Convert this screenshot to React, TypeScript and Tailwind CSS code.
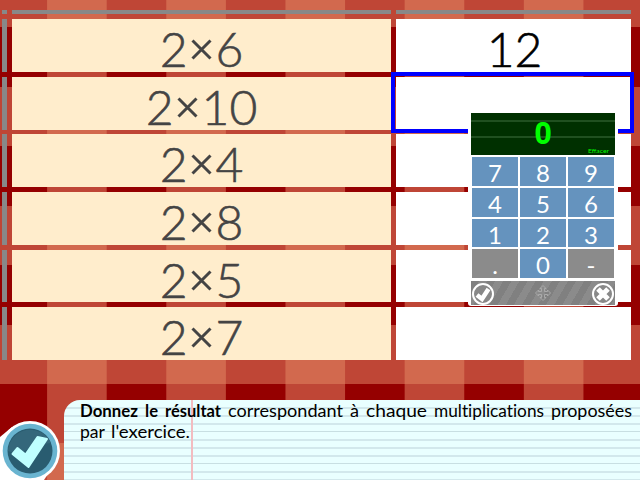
const rows: { q: string; a: string; size: string }[] = [
  { q: "6", a: "12", size: "mb-[5px] h-[53px]" },
  { q: "10", a: "", size: "mb-[4px] h-[53px]" },
  { q: "4", a: "", size: "mb-[5px] h-[53px]" },
  { q: "8", a: "", size: "mb-[5px] h-[53px]" },
  { q: "5", a: "", size: "mb-[5px] h-[52px]" },
  { q: "7", a: "", size: "h-[53px]" },
];

const keys = ["7", "8", "9", "4", "5", "6", "1", "2", "3", ".", "0", "-"];

const words: { t: string; w: number; bold?: boolean }[] = [
  { t: "Donnez", w: 58, bold: true },
  { t: "le", w: 13, bold: true },
  { t: "résultat", w: 56, bold: true },
  { t: "correspondant", w: 115 },
  { t: "à", w: 9 },
  { t: "chaque", w: 61 },
  { t: "multiplications", w: 110 },
  { t: "proposées", w: 81 },
];

function Word({ t, w, bold }: { t: string; w: number; bold?: boolean }) {
  return (
    <svg width={w} height="21" className="block shrink-0 overflow-visible">
      <text
        x="0"
        y="16"
        textLength={w}
        lengthAdjust="spacingAndGlyphs"
        className={bold ? "text-[16.5px] font-bold" : "text-[16.5px] font-normal"}
        style={{ fontVariantLigatures: "none" }}
      >
        {t}
      </text>
    </svg>
  );
}

function Exercise() {
  return (
    <div className="ml-[2px] w-[629px] pt-[10px]">
      <div className="mb-[5px] flex h-[4px] gap-[5px]">
        <div className="w-[5px] bg-[#888]" />
        <div className="w-[379px] bg-[#888]" />
        <div className="w-[235px] bg-[#888]" />
      </div>
      {rows.map((r) => (
        <div key={r.q} className={"flex gap-[5px] " + r.size}>
          <div className="w-[5px] bg-[#888]" />
          <div className="flex w-[379px] justify-center bg-[#ffedcc] text-[48px] leading-[60px] font-light text-[#444] [-webkit-text-stroke:0.6px_#444]">
            <span>2</span>
            <svg width="28" height="53" className="block overflow-visible">
              <path d="M4.5 21.5L22.5 39.5M22.5 21.5L4.5 39.5" stroke="#444" strokeWidth="3" />
            </svg>
            <span>{r.q}</span>
          </div>
          <div className="w-[235px] bg-white pl-[2px] text-center text-[48px] leading-[60px] font-light text-black [-webkit-text-stroke:0.6px_#000]">
            {r.a}
          </div>
        </div>
      ))}
    </div>
  );
}

function Keypad() {
  return (
    <div className="absolute top-[110px] left-[468px] h-[196px] w-[150px] rounded-[3px] bg-white px-[3px] pt-[3px]">
      <div className="relative flex h-[42px] justify-center bg-[#003000] pt-[7px]">
        <div className="absolute inset-x-0 top-[7px] h-[18px] border-y-2 border-[#205020]" />
        <span className="relative font-['Noto_Sans',sans-serif] text-[30px] leading-[26px] font-bold text-[#00ff00]">0</span>
        <svg className="absolute right-[5px] bottom-0 h-[8px] w-[22px]">
          <text x="0" y="6" textLength="21" lengthAdjust="spacingAndGlyphs" fill="#00ff00" className="text-[6px]">
            Effacer
          </text>
        </svg>
      </div>
      <div className="mx-px mt-[2px] grid h-[121px] grid-cols-3 grid-rows-[29px_29px_28px_29px] gap-[2px]">
        {keys.map((k) => (
          <div
            key={k}
            className={
              k === "." || k === "-"
                ? "bg-[#8b8b8b] text-center text-[24px] leading-[32px] text-white"
                : "bg-[#6593be] text-center text-[24px] leading-[31px] text-white"
            }
          >
            {k}
          </div>
        ))}
      </div>
      <div className="mt-[3px] flex h-[24px] items-center justify-between bg-[repeating-linear-gradient(120deg,#808080_0px,#808080_7px,#8b8b8b_7px,#8b8b8b_14px)]">
        <svg width="24" height="24" viewBox="0 0 24 24">
          <circle cx="12" cy="13" r="10" fill="#888" stroke="#fff" strokeWidth="2" />
          <path d="M6 14L11 18L17.5 8" fill="none" stroke="#fff" strokeWidth="4.5" />
        </svg>
        <svg width="18" height="20" viewBox="0 0 18 20" fill="none" stroke="#aaa">
          <path d="M9 2.5l3 3h-1.5v3h3V7l3 3l-3 3v-1.5h-3v3H12l-3 3l-3-3h1.5v-3h-3V13l-3-3l3-3v1.5h3v-3H6z" />
        </svg>
        <svg width="24" height="24" viewBox="0 0 24 24">
          <circle cx="12" cy="13" r="10" fill="#888" stroke="#fff" strokeWidth="2" />
          <path d="M7 8L17 18M17 8L7 18" stroke="#fff" strokeWidth="5" />
        </svg>
      </div>
    </div>
  );
}

function Instructions() {
  return (
    <div className="relative ml-[64px] h-[80px] overflow-hidden rounded-tl-[16px] bg-[#e9ffff] bg-[repeating-linear-gradient(180deg,transparent_0px,transparent_7px,#d2e8ec_7px,#d2e8ec_9px,transparent_9px,transparent_15px,#d2e8ec_15px,#d2e8ec_17px,transparent_17px,transparent_23px,#d2e8ec_23px,#d2e8ec_25px,transparent_25px,transparent_31px,#c8dfe2_31px,#c8dfe2_32px)] pt-[1px] pl-[16px] text-black">
      <div className="absolute top-0 left-[127px] h-full w-[2px] bg-[#f3bcc0]" />
      <div className="relative flex w-[552px] justify-between">
        {words.map((w) => (
          <Word key={w.t} {...w} />
        ))}
      </div>
      <div className="relative flex gap-[6px]">
        <Word t="par" w={25} />
        <Word t="l'exercice." w={79} />
      </div>
    </div>
  );
}

export default function App() {
  return (
    <div className="relative flex h-[480px] w-[640px] flex-col justify-between overflow-hidden bg-[conic-gradient(#bf4636_25%,#d2694e_25%_50%,#bf4636_50%_75%,#950000_75%)] bg-[length:119.2px_119px] bg-[position:-12.5px_27px] font-[Lato,sans-serif]">
      <Exercise />
      <div className="absolute top-[72px] left-[391px] h-[61px] w-[243px] border-4 border-[#0000ff]" />
      <Keypad />
      <Instructions />
      <svg className="absolute bottom-0 left-0" width="62" height="65" viewBox="0 0 62 65">
        <path d="M0 22L12 12L59 42L44 65H0Z" fill="#fff" />
        <circle cx="30" cy="36" r="30" fill="#fff" />
        <circle cx="30" cy="36" r="27.3" fill="#69b4d0" />
        <circle cx="30" cy="36" r="22.5" fill="#295c70" />
        <path d="M8 36A22.5 22.5 0 0 1 51 28Q28 31 19 40Z" fill="#34677b" />
        <path
          d="M12.5 39L17.5 33L25.5 39.5L37.5 22L47 24L28.5 52Z"
          fill="#bfffff"
          stroke="#bfffff"
          strokeWidth="2"
          strokeLinejoin="round"
        />
      </svg>
    </div>
  );
}
